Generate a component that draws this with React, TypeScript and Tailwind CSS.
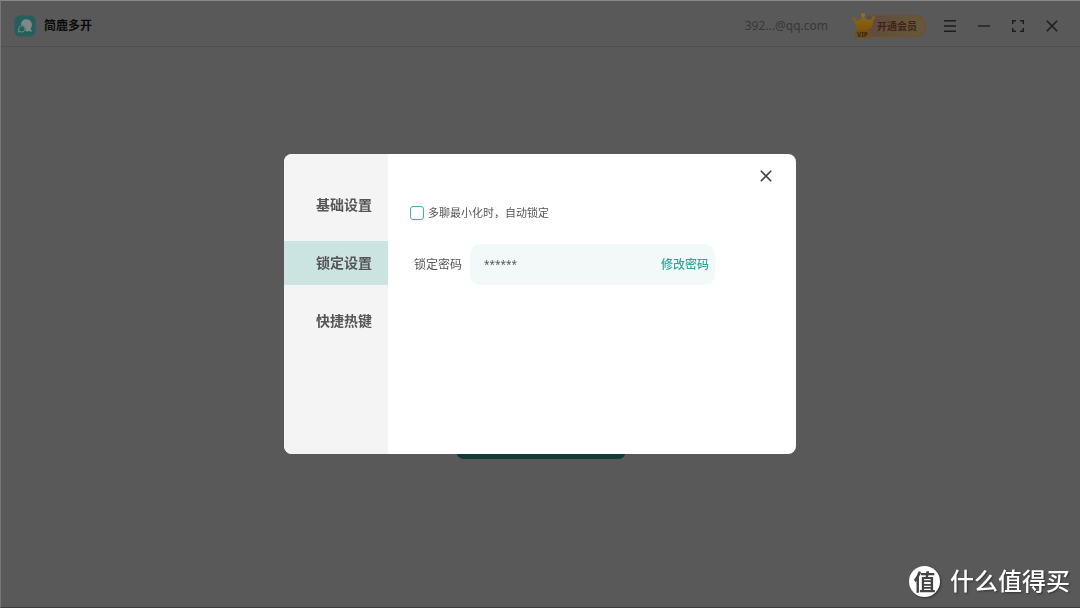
import { useState } from "react"

const tabs = ["基础设置", "锁定设置", "快捷热键"]

function Logo() {
  return (
    <svg viewBox="0 0 22 22" className="size-[22px] shrink-0" aria-hidden="true">
      <rect x="0.5" y="0.5" width="21" height="21" rx="5.5" fill="#255f5c" />
      <path
        d="M7.200 9.800C6.800 6.600 9 4.200 12.200 4.200c3.300 0 5.700 2.200 5.700 5.400 0 1.600-.4 2.800-1.200 3.800l1.300 3.400-3.500-.9c-1 .5-2 .6-3 .4.900-2.600-.6-5.700-4.300-6.500z"
        fill="#7c8988"
      />
      <path
        d="M8 10.800a3.100 3.100 0 1 1-1.700 5.700l-1.900.6.600-1.900A3.100 3.100 0 0 1 8 10.800z"
        fill="#255f5c"
        stroke="#7c8988"
        strokeWidth="1"
      />
    </svg>
  )
}

function Crown() {
  return (
    <svg viewBox="0 0 24 28" className="relative h-7 w-6 shrink-0" aria-hidden="true">
      <defs>
        <linearGradient id="crown" x1="0" y1="0" x2="0" y2="1">
          <stop offset="0" stopColor="#8a6a1c" />
          <stop offset="1" stopColor="#7f5408" />
        </linearGradient>
      </defs>
      <path
        d="M1.500 6.500c2 2 4 2.600 6 1.500 1.500-.9 2.500-2.500 3.500-4.500 1.500 2 3 3.800 4.800 4.200 2 .4 4-.4 6-2l-2 9.300c-.3 1.200-1.100 2-2.300 2.300-3.500.9-7 1.100-10.400.7-1.300-.1-2.200-.9-2.500-2.100z"
        fill="url(#crown)"
      />
      <circle cx="1.900" cy="6.600" r="1.800" fill="#80601c" />
      <circle cx="11" cy="3" r="2.200" fill="#8c6f20" />
      <circle cx="21.500" cy="5.800" r="1.800" fill="#80601c" />
      <rect x="3" y="18" width="16" height="8" rx="2" fill="#71501a" />
      <text x="10.500" y="24.500" textAnchor="middle" fontSize="6.500" fontWeight="700" fill="#35260f">
        VIP
      </text>
    </svg>
  )
}

function CloseIcon() {
  return (
    <svg viewBox="0 0 12 12" className="size-3" fill="none" stroke="currentColor" strokeWidth="1.600" aria-hidden="true">
      <path d="M.8.8l10.400 10.400M11.200.8L.8 11.200" />
    </svg>
  )
}

function TitleBar() {
  return (
    <header className="flex h-[46px] items-center justify-between border-b border-[#4f4f4f] pt-[5px] pr-[22px] pl-[13px]">
      <div className="flex items-center gap-2">
        <Logo />
        <h1 className="text-[12px] font-bold text-[#0a0a0a]">简鹿多开</h1>
      </div>
      <div className="flex items-center text-[#1d1d1d]">
        <span className="mr-6 text-[12px] text-[#383838]">392...@qq.com</span>
        <button type="button" className="mr-[18px] flex items-center">
          <Crown />
          <span className="-ml-[9px] flex h-[22px] items-center rounded-r-full border border-l-0 border-[#754d28] bg-linear-to-r from-[#5f4a42] to-[#685838] pr-2 pl-[10px] text-[10px] font-bold text-[#3f2415]">
            开通会员
          </span>
        </button>
        <div className="flex items-center gap-[22px]">
          <button type="button" aria-label="菜单">
            <svg viewBox="0 0 12 12" className="size-3" stroke="currentColor" strokeWidth="1.400" aria-hidden="true">
              <path d="M0 .7h12M0 6h12M0 11.300h12" />
            </svg>
          </button>
          <button type="button" aria-label="最小化">
            <svg viewBox="0 0 12 12" className="size-3" stroke="currentColor" strokeWidth="1.400" aria-hidden="true">
              <path d="M0 6h12" />
            </svg>
          </button>
          <button type="button" aria-label="全屏">
            <svg
              viewBox="0 0 12 12"
              className="size-3"
              fill="none"
              stroke="currentColor"
              strokeWidth="1.500"
              aria-hidden="true"
            >
              <path d="M.75 4V.75H4M8 .75h3.250V4M11.250 8v3.250H8M4 11.250H.75V8" />
            </svg>
          </button>
          <button type="button" aria-label="关闭">
            <CloseIcon />
          </button>
        </div>
      </div>
    </header>
  )
}

function LockSettings() {
  return (
    <div className="flex-1 pt-[51px] pr-[81px] pl-[22px]">
      <label className="flex h-4 items-center gap-1 text-[11px] text-[#555]">
        <input type="checkbox" className="size-[14px] appearance-none rounded-[3px] border border-[#3fb0a8] bg-white" />
        多聊最小化时，自动锁定
      </label>
      <div className="mt-[23px] flex items-center gap-2 pl-1">
        <label htmlFor="lock-password" className="shrink-0 text-[12px] text-[#555]">
          锁定密码
        </label>
        <div className="flex h-[41px] min-w-0 flex-1 items-center rounded-[10px] bg-[#f3f9f9] pr-[6px] pl-[14px]">
          <input
            id="lock-password"
            type="text"
            readOnly
            value="******"
            className="w-0 min-w-0 flex-1 bg-transparent text-[10px] text-[#555] outline-none"
          />
          <button type="button" className="shrink-0 text-[12px] font-medium text-[#2ea59d]">
            修改密码
          </button>
        </div>
      </div>
    </div>
  )
}

function SettingsDialog() {
  const [active, setActive] = useState(1)

  return (
    <div
      role="dialog"
      aria-label="设置"
      className="relative flex min-h-[300px] w-[512px] max-w-full overflow-hidden rounded-[8px] bg-white"
    >
      <nav className="flex w-[104px] shrink-0 flex-col gap-[14px] bg-[#f4f4f4] pt-[29px]">
        {tabs.map((tab, i) => (
          <button
            key={tab}
            type="button"
            onClick={() => setActive(i)}
            className={`h-11 pb-0.5 pl-8 text-left text-[14px] font-bold text-[#555] ${i === active ? "bg-[#cbe4e2]" : ""}`}
          >
            {tab}
          </button>
        ))}
      </nav>
      <LockSettings />
      <button type="button" aria-label="关闭设置" className="absolute top-[15px] right-6 py-px text-[#444]">
        <CloseIcon />
      </button>
    </div>
  )
}

function Watermark() {
  return (
    <div className="absolute right-[10px] bottom-2 flex items-center gap-[10px] text-white">
      <span className="flex size-[31px] items-center justify-center rounded-full bg-white text-[22px] font-bold text-[#444] shadow-[1px_1px_2px_#333]">
        值
      </span>
      <span className="text-[24px] leading-9 font-medium [text-shadow:1px_1px_2px_#333]">什么值得买</span>
    </div>
  )
}

export default function App() {
  return (
    <div className="relative flex min-h-screen flex-col border-t border-b border-l border-t-[#858886] border-b-[#3c3c3c] border-l-[#777] bg-[#595959] font-['Noto_Sans','Noto_Sans_CJK_SC',sans-serif]">
      <TitleBar />
      <main className="flex flex-1 items-end justify-center pb-[148px]">
        <button type="button" className="h-10 w-[170px] rounded-[8px] bg-[#0f3b38] text-[14px] text-[#595959]">
          开始使用
        </button>
      </main>
      <div className="fixed inset-0 flex items-center justify-center">
        <SettingsDialog />
      </div>
      <Watermark />
    </div>
  )
}
